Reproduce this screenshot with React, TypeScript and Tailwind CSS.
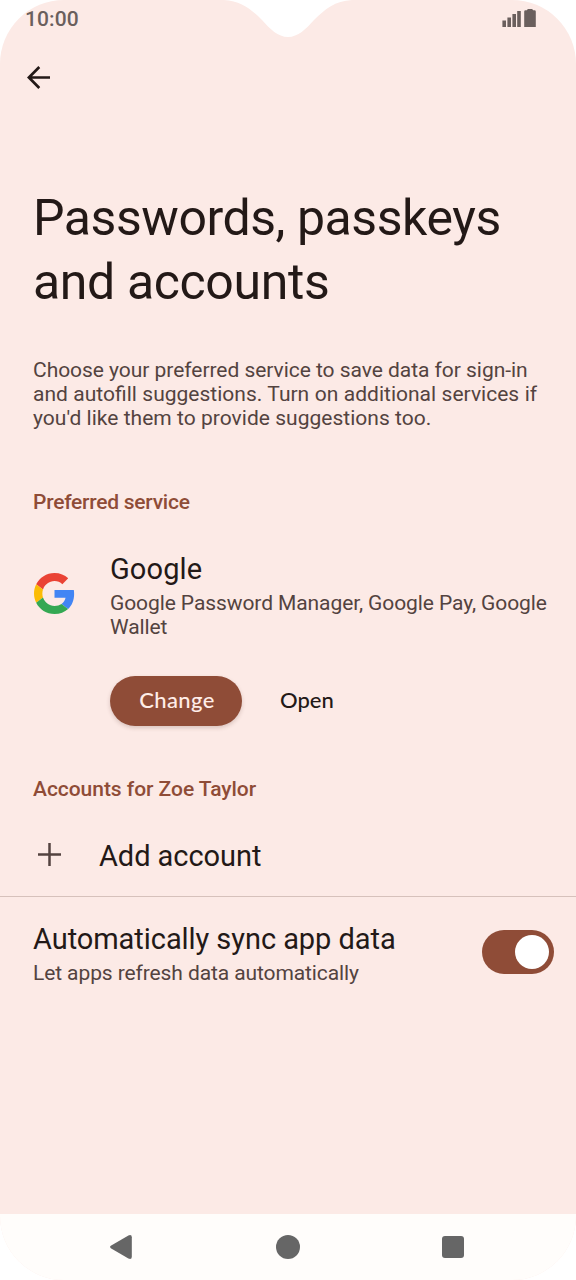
import { useState } from "react";

function StatusBar() {
  return (
    <div className="flex h-[38px] items-start justify-between pl-[25px] pr-10 pt-[7px] text-[#6a5f5d]">
      <span className="text-[21px] leading-6 font-medium tracking-[0.1px]">10:00</span>
      <svg className="mt-0.5 h-[19px] w-[34px]" viewBox="0 0 34 19" fill="currentColor">
        <rect x="0.4" y="11.5" width="3.6" height="6.5" />
        <rect x="5.4" y="8.5" width="3.6" height="9.5" />
        <rect x="10.4" y="5" width="3.6" height="13" />
        <rect x="15.2" y="2" width="3.6" height="16" />
        <path d="M22.2 2.5Q22.2 1.3 23.6 1.2H25Q25.2 0 26.5 0H29.5Q30.8 0 31 1.2H32.4Q33.8 1.3 33.8 2.5V18H22.2Z" />
      </svg>
    </div>
  );
}

// camera notch that hangs over the top edge
function Notch() {
  return (
    <svg className="absolute left-[224px] top-0 h-[37px] w-32" viewBox="0 0 128 37" fill="#fff">
      <path d="M0 0C17 1 27 9 38 20C46 29 54 37 64 37C74 37 82 29 90 20C101 9 111 1 128 0Z" />
    </svg>
  );
}

function GoogleLogo() {
  return (
    <svg className="h-[41px] w-[41px]" viewBox="0 0 48 48">
      <path fill="#EA4335" d="M24 9.5c3.54 0 6.71 1.22 9.21 3.6l6.85-6.85C35.9 2.38 30.47 0 24 0 14.62 0 6.51 5.38 2.56 13.22l7.98 6.19C12.43 13.72 17.74 9.5 24 9.5z" />
      <path fill="#4285F4" d="M46.98 24.55c0-1.57-.15-3.09-.38-4.55H24v9.02h12.94c-.58 2.96-2.26 5.48-4.78 7.18l7.73 6c4.51-4.18 7.09-10.36 7.09-17.65z" />
      <path fill="#FBBC05" d="M10.53 28.59c-.48-1.45-.76-2.99-.76-4.59s.27-3.14.76-4.59l-7.98-6.19C.92 16.46 0 20.12 0 24c0 3.88.92 7.54 2.56 10.78l7.97-6.19z" />
      <path fill="#34A853" d="M24 48c6.48 0 11.93-2.13 15.89-5.81l-7.73-6c-2.15 1.45-4.92 2.3-8.16 2.3-6.26 0-11.57-4.22-13.47-9.91l-7.98 6.19C6.51 42.62 14.62 48 24 48z" />
    </svg>
  );
}

function NavBar() {
  return (
    <div className="flex h-[66px] items-center justify-between bg-[#fffdfb] pl-[109px] pr-28 text-[#666]">
      <button aria-label="Back">
        <svg className="h-6 w-6" viewBox="0 0 24 24" fill="currentColor">
          <path d="M1.8 10.8L19.4 0.4Q22.8-.8 22.8 2.3V21.7Q22.8 24.8 19.4 23.6L1.8 13.2Q.4 12 1.8 10.8Z" />
        </svg>
      </button>
      <button aria-label="Home" className="h-6 w-6 rounded-full bg-[#666]" />
      <button aria-label="Recents" className="h-[22px] w-[22px] rounded-[3px] bg-[#666]" />
    </div>
  );
}

export default function App() {
  const [sync, setSync] = useState(true);

  return (
    <div className="h-[1280px] w-[576px] bg-white font-[Roboto,sans-serif]">
      <div className="relative flex h-full flex-col overflow-hidden rounded-[64px] bg-[#fceae6] text-[#231917]">
        <Notch />
        <StatusBar />

        <header className="flex h-20 items-center pb-0.5 pl-[27px]">
          <button aria-label="Go back">
            <svg className="h-[23px] w-[23px]" viewBox="0 0 23 23" fill="none" stroke="currentColor" strokeWidth="2.7">
              <path d="M23 11.5H2.5M12.3 1L1.9 11.5L12.3 22" />
            </svg>
          </button>
        </header>

        <main className="flex-1">
          <div className="px-[33px] pt-[68px]">
            <h1 className="text-[50px] leading-16 tracking-[-0.45px] whitespace-nowrap">
              Passwords, passkeys
              <br />
              <span className="tracking-[-0.37px]">and accounts</span>
            </h1>
            <p className="mt-11 text-[21px] leading-6 whitespace-nowrap text-[#534340]">
              <span className="tracking-[-0.04px]">Choose your preferred service to save data for sign-in</span>
              <br />
              <span className="[word-spacing:0.3px]">and autofill suggestions. Turn on additional services if</span>
              <br />
              <span className="tracking-[0.025px]">you'd like them to provide suggestions too.</span>
            </p>
          </div>

          <section className="mt-15 px-[33px]">
            <h2 className="text-[21px] leading-6 font-medium tracking-[-0.25px] text-[#8f4c37]">Preferred service</h2>
            <div className="mt-[35px] flex items-center">
              <div className="-mt-px w-[77px] shrink-0 pl-px">
                <GoogleLogo />
              </div>
              <div className="whitespace-nowrap">
                <h3 className="text-[29px] leading-10 tracking-[0.1px]">Google</h3>
                <p className="mt-0.5 text-[21px] leading-6 tracking-[-0.09px] text-[#534340]">
                  Google Password Manager, Google Pay, Google
                  <br />
                  Wallet
                </p>
              </div>
            </div>
            <div className="mt-[37px] flex pl-[77px] font-[Lato,sans-serif] text-[22px] font-medium">
              <button className="h-[50px] w-[132px] rounded-full bg-[#8f4c37] pb-[3px] pl-0.5 tracking-[0.4px] text-[#ffede8] shadow-[0_2px_4px_rgba(80,40,30,0.2)]">
                Change
              </button>
              <button className="ml-[38px] h-[50px] pb-[3px]">Open</button>
            </div>
          </section>

          <section className="mt-[51px]">
            <h2 className="px-[33px] text-[21px] leading-6 font-medium tracking-[-0.04px] text-[#8f4c37]">
              Accounts for Zoe Taylor
            </h2>
            <button className="flex h-24 w-full items-center border-b border-[#d6c1bb] pl-[38px] pt-4 text-left">
              <svg className="-mt-1 h-[23px] w-[23px]" viewBox="0 0 23 23" stroke="#534340" strokeWidth="2.5">
                <path d="M11.5 0V23M0 11.5H23" />
              </svg>
              <span className="-mt-0.5 ml-[38px] text-[29px] leading-10 tracking-[-0.05px]">Add account</span>
            </button>
          </section>

          <section className="flex items-center justify-between pl-[33px] pr-[22px] pt-[22px]">
            <div>
              <h3 className="text-[29px] leading-10 tracking-[-0.06px]">Automatically sync app data</h3>
              <p className="mt-0.5 text-[21px] leading-6 tracking-[-0.1px] text-[#534340]">
                Let apps refresh data automatically
              </p>
            </div>
            <button
              role="switch"
              aria-checked={sync}
              aria-label="Automatically sync app data"
              onClick={() => setSync(!sync)}
              className={`flex h-11 w-[72px] items-center rounded-full px-[5px] ${
                sync ? "justify-end bg-[#8f4c37]" : "justify-start bg-[#85736e]"
              }`}
            >
              <span className="h-[34px] w-[34px] rounded-full bg-white" />
            </button>
          </section>
        </main>

        <NavBar />
      </div>
    </div>
  );
}
